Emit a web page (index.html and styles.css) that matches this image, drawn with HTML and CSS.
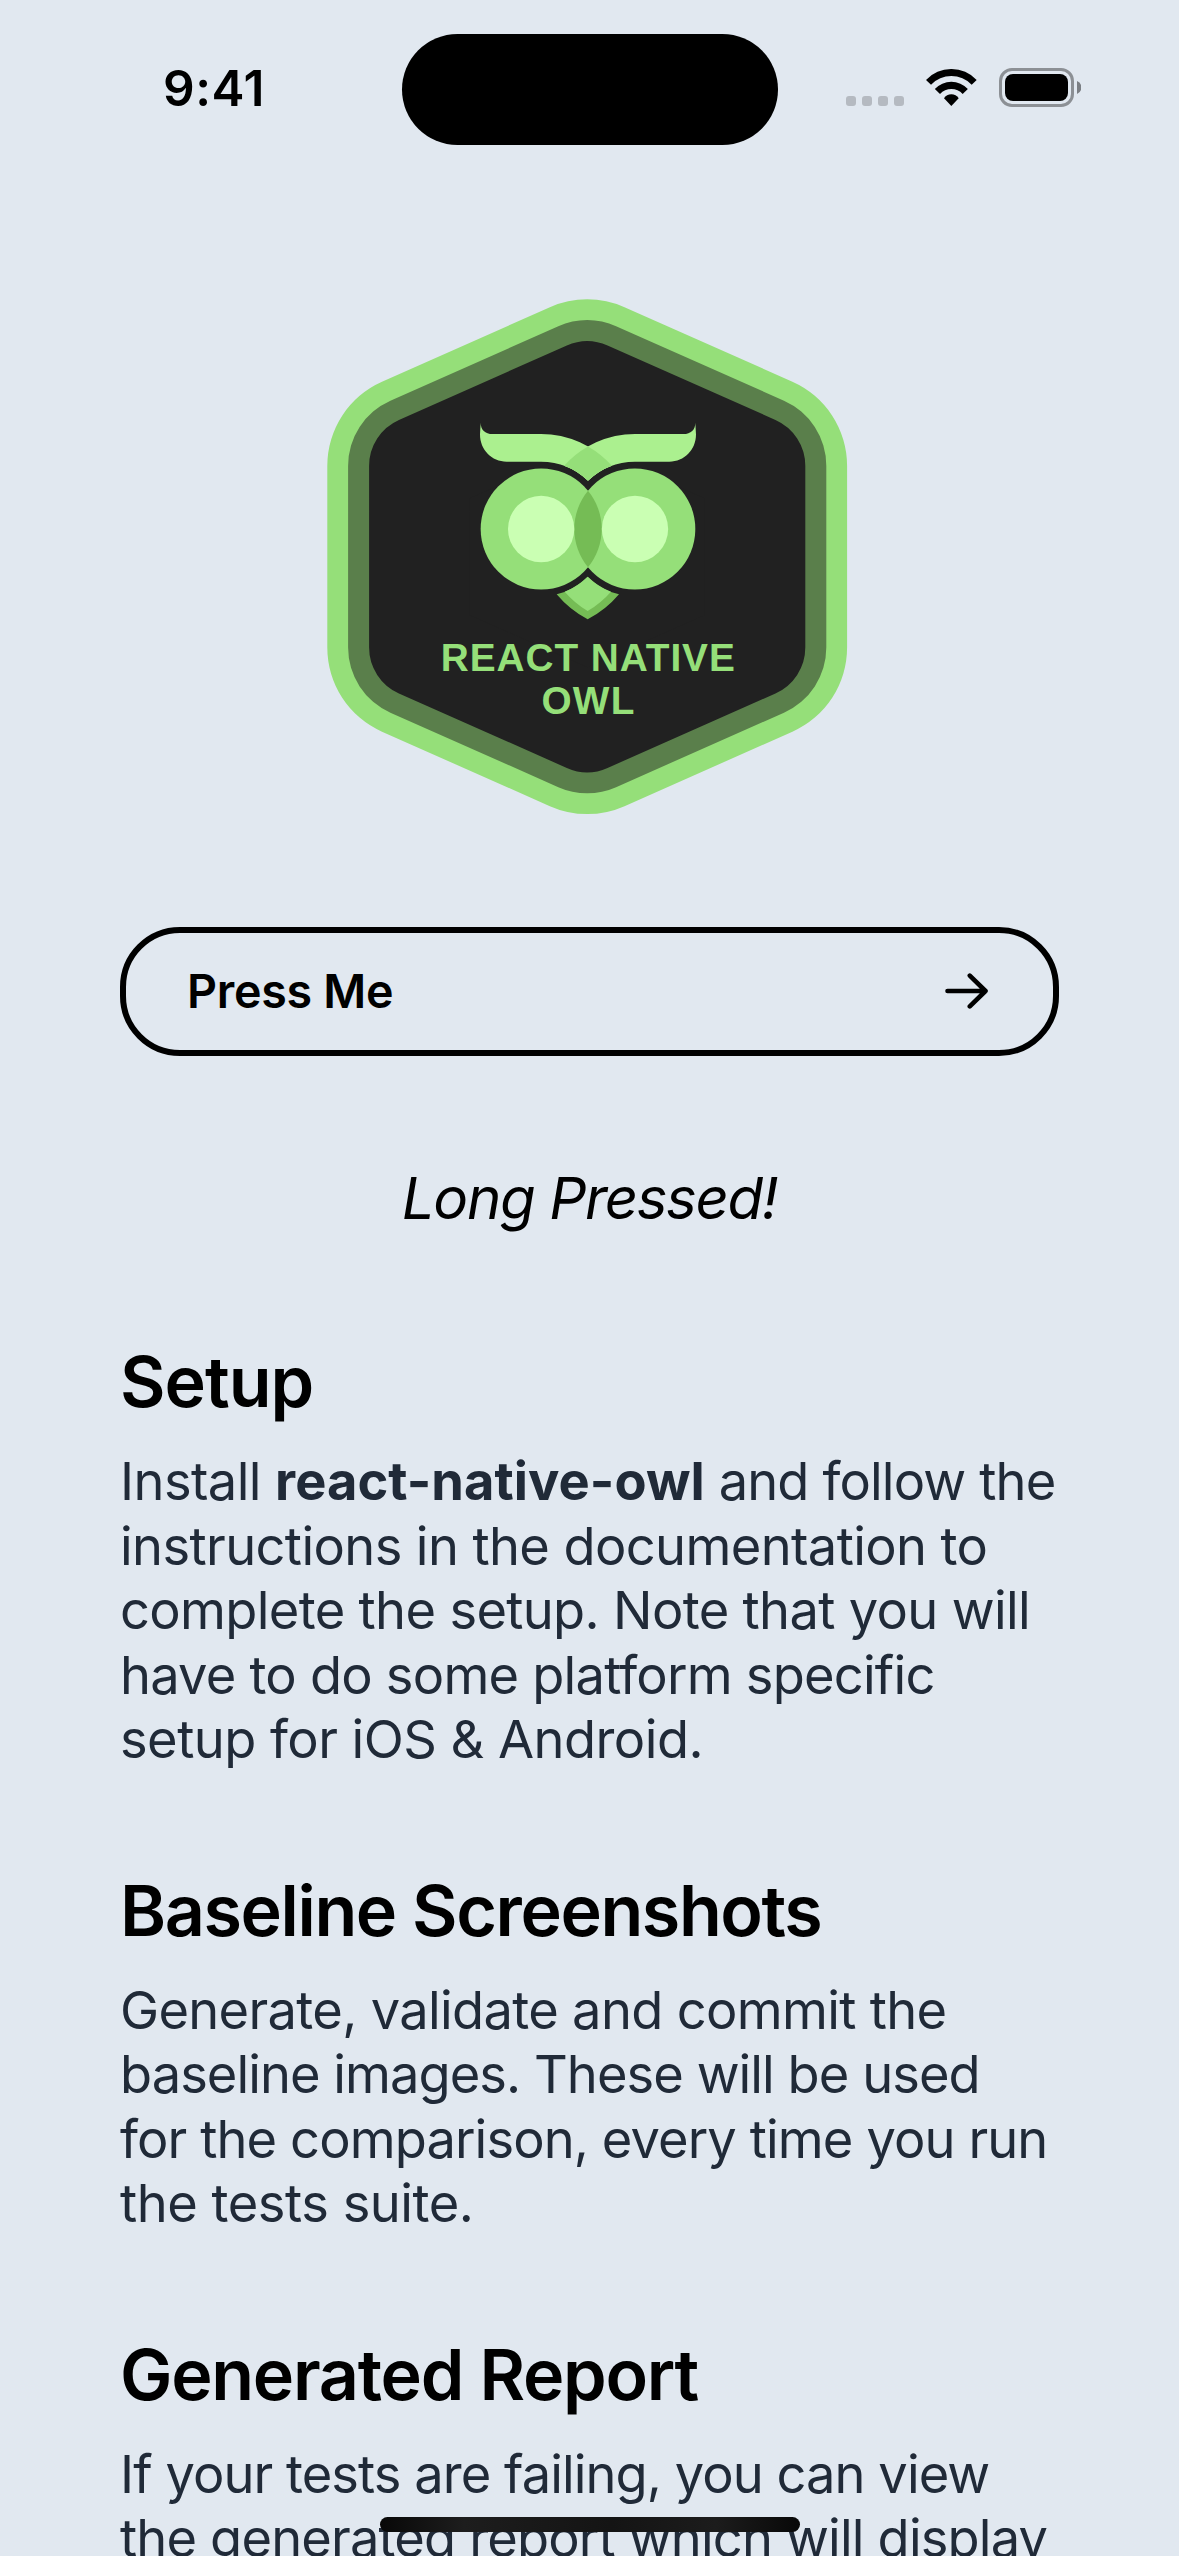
FILE: index.html
```
<!DOCTYPE html>
<html lang="en">
<head>
<meta charset="utf-8">
<title>React Native Owl</title>
<link rel="stylesheet" href="styles.css">
</head>
<body>
<div class="screen">
  <header class="status-bar">
    <span class="clock">9:41</span>
    <div class="island"></div>
    <div class="indicators">
      <div class="cellular"><i></i><i></i><i></i><i></i></div>
      <svg class="wifi" viewBox="558 147 152 111" aria-hidden="true">
        <path d="M558 180A104 104 0 0 1 710 180L695 194A85 85 0 0 0 573 194Z"/>
        <path d="M584.5 207A68 68 0 0 1 683.5 207L668 222A46 46 0 0 0 600 222Z"/>
        <path d="M612 235A26 26 0 0 1 656 235L634 258Z"/>
      </svg>
      <div class="battery"><div class="battery-case"><div class="battery-level"></div></div><svg class="battery-nub" viewBox="0 0 4 13" aria-hidden="true"><path d="M0 0A7 7 0 0 1 0 13Z"/></svg></div>
    </div>
  </header>

  <main class="content">
    <svg class="logo" viewBox="327 299 520.6 515.6" role="img" aria-label="React Native Owl">
      <g stroke-linejoin="round">
        <path d="M419.3 465.8L587.2 391.3L755.1 465.8V647.6L587.2 722.1L419.3 647.6Z" fill="#95df79" stroke="#95df79" stroke-width="184"/>
        <path d="M419.3 465.8L587.2 391.3L755.1 465.8V647.6L587.2 722.1L419.3 647.6Z" fill="#5a7f4b" stroke="#5a7f4b" stroke-width="142.4"/>
        <path d="M419.3 465.8L587.2 391.3L755.1 465.8V647.6L587.2 722.1L419.3 647.6Z" fill="#212121" stroke="#212121" stroke-width="100.4"/>
      </g>
      <g transform="translate(460 400) scale(.33333)">
        <path fill="#abf08f" d="M62 68C62 89 75 102 98 102H243A285 285 0 0 1 455.7 197.3A202 202 0 0 0 384 242.3A202 202 0 0 0 243 185H140C95 185 60 150 60 103Z"/>
        <path fill="#abf08f" d="M706 68C706 89 693 102 670 102H525A285 285 0 0 0 312.3 197.3A202 202 0 0 1 384 242.3A202 202 0 0 1 525 185H628C673 185 708 150 708 103Z"/>
        <path fill="#95df79" d="M384 139.3A285 285 0 0 1 455.7 197.3A202 202 0 0 0 384 242.3A202 202 0 0 0 312.3 197.3A285 285 0 0 1 384 139.3Z"/>
        <circle cx="243.5" cy="387" r="181.5" fill="#95df79"/>
        <circle cx="524.5" cy="387" r="181.5" fill="#95df79"/>
        <path fill="#75bc55" d="M384 272A181.5 181.5 0 0 1 384 502A181.5 181.5 0 0 1 384 272Z"/>
        <circle cx="243.5" cy="387" r="99.5" fill="#caffb3"/>
        <circle cx="525" cy="387" r="99.5" fill="#caffb3"/>
        <path fill="#75bc55" d="M290 583A202 202 0 0 0 383 530A202 202 0 0 0 477 583A306 306 0 0 1 383 658A306 306 0 0 1 290 583Z"/>
        <path fill="#95df79" d="M314 575A202 202 0 0 0 383 530A202 202 0 0 0 453 575A285 285 0 0 1 383 633A285 285 0 0 1 314 575Z"/>
      </g>
      <g class="logo-text">
        <text x="440.8" y="670.7" textLength="294">REACT NATIVE</text>
        <text x="541.4" y="714.3" textLength="93">OWL</text>
      </g>
    </svg>

    <button class="press-button" type="button">
      <span>Press Me</span>
      <svg class="arrow" viewBox="0 0 43 36" aria-hidden="true"><path d="M2.5 18H40.5M24.8 2.6L40.5 18L24.8 33.4"/></svg>
    </button>

    <p class="status-text">Long Pressed!</p>

    <section class="section">
      <h2 class="heading">Setup</h2>
      <p class="body-text">
        <span class="line"><span class="install">Install </span><b>react-native-owl</b><span class="follow"> and follow the</span></span>
        <span class="line l2">instructions in the documentation to</span>
        <span class="line l3">complete the setup. Note that you will</span>
        <span class="line l4">have to do some platform specific</span>
        <span class="line l5">setup for iOS &amp; Android.</span>
      </p>
    </section>

    <section class="section">
      <h2 class="heading wide">Baseline Screenshots</h2>
      <p class="body-text">
        <span class="line l6">Generate, validate and commit the</span>
        <span class="line l7">baseline images. These will be used</span>
        <span class="line l8">for the comparison, every time you run</span>
        <span class="line l9">the tests suite.</span>
      </p>
    </section>

    <section class="section">
      <h2 class="heading report">Generated Report</h2>
      <p class="body-text">
        <span class="line l10">If your tests are failing, you can view</span>
        <span class="line l11">the generated report which will display</span>
      </p>
    </section>
  </main>
  <div class="home-indicator"></div>
</div>
</body>
</html>
```
FILE: styles.css
```
* { box-sizing: border-box; }

body {
  margin: 0;
  background: #e1e8f0;
  color: #000;
  font-family: Inter, "Liberation Sans", sans-serif;
}

.screen {
  position: relative;
  height: 2556px;
  overflow: hidden;
}

/* Status bar */
.status-bar {
  display: grid;
  grid-template-columns: 401.5px 376px 1fr;
  height: 177px;
  padding-top: 33.6px;
}
.clock {
  padding-left: 163px;
  font-size: 49.5px;
  font-weight: 600;
  line-height: 60px;
  margin-top: 24.4px;
  letter-spacing: .55px;
}
.island {
  height: 111px;
  border-radius: 56px;
  background: #000;
}
.indicators {
  display: flex;
  height: 40px;
  margin-top: 34px;
  padding-left: 68.5px;
}
.cellular {
  display: flex;
  align-items: flex-end;
  gap: 6px;
  height: 38.4px;
  margin-right: 22px;
}
.cellular i {
  width: 10px;
  height: 10px;
  border-radius: 3px;
  background: #b5bac1;
}
.wifi {
  width: 50.7px;
  height: 37px;
  margin: 1.4px 22.3px 0 0;
}
.battery {
  display: flex;
  align-items: center;
  gap: 3px;
  height: 39px;
}
.battery-case {
  width: 75px;
  height: 39px;
  padding: 3px;
  border: 3px solid #8c9095;
  border-radius: 13px;
}
.battery-level {
  height: 27px;
  border-radius: 8px;
  background: #000;
}
.battery-nub {
  width: 4px;
  height: 13px;
  fill: #7b7f84;
}

/* Page */
.content {
  display: flex;
  flex-direction: column;
  padding: 122px 120px 0;
}
.logo {
  align-self: center;
  width: 520.6px;
  height: 515.6px;
  margin-right: 4.4px;
}
.logo-text {
  fill: #95df79;
  font: bold 38.8px "Liberation Sans", Arial, sans-serif;
}

.press-button {
  display: flex;
  align-items: center;
  justify-content: space-between;
  height: 129px;
  margin-top: 112.4px;
  padding: 0 65.5px 0 61px;
  border: 6px solid #000;
  border-radius: 60px;
  background: none;
  color: #000;
  font: 600 46.6px/57px Inter, "Liberation Sans", sans-serif;
  letter-spacing: -.28px;
}
.arrow {
  width: 43px;
  height: 36px;
  fill: none;
  stroke: #000;
  stroke-width: 4.6;
  stroke-linecap: round;
  stroke-linejoin: round;
}

.status-text {
  margin: 106px 0 8.5px;
  font-size: 58.2px;
  font-style: italic;
  line-height: 72px;
  letter-spacing: -1.37px;
  text-align: center;
}

.section { margin-top: 96px; }
.status-text + .section { margin-top: 97px; }

.heading {
  margin: 0 0 24px;
  font-size: 70px;
  font-weight: 600;
  line-height: 86px;
  letter-spacing: -1px;
}
.heading.wide { letter-spacing: -1.4px; }
.heading.report { letter-spacing: -1.27px; }

.body-text {
  margin: 0;
  color: #202a38;
  font-size: 52.4px;
  line-height: 64.5px;
}
.line {
  display: block;
  white-space: nowrap;
}
.install { letter-spacing: -.57px; }
.body-text b { font-weight: 700; letter-spacing: .07px; }
.follow { letter-spacing: -.85px; }
.l2 { letter-spacing: -.6px; }
.l3 { letter-spacing: -.65px; }
.l4 { letter-spacing: -.77px; }
.l5 { letter-spacing: -.53px; }
.l6 { letter-spacing: -.66px; }
.l7 { letter-spacing: -.94px; }
.l8 { letter-spacing: -.88px; }
.l9 { letter-spacing: -.46px; }
.l10 { letter-spacing: -.93px; }
.l11 { letter-spacing: -.82px; }

/* Floats over the scrolled page */
.home-indicator {
  position: absolute;
  left: 380px;
  bottom: 24px;
  width: 420px;
  height: 15px;
  border-radius: 7.5px;
  background: linear-gradient(90deg, #080808, #1d1d1d 20%, #141414 55%, #1c1c1c 80%, #080808);
}
```
